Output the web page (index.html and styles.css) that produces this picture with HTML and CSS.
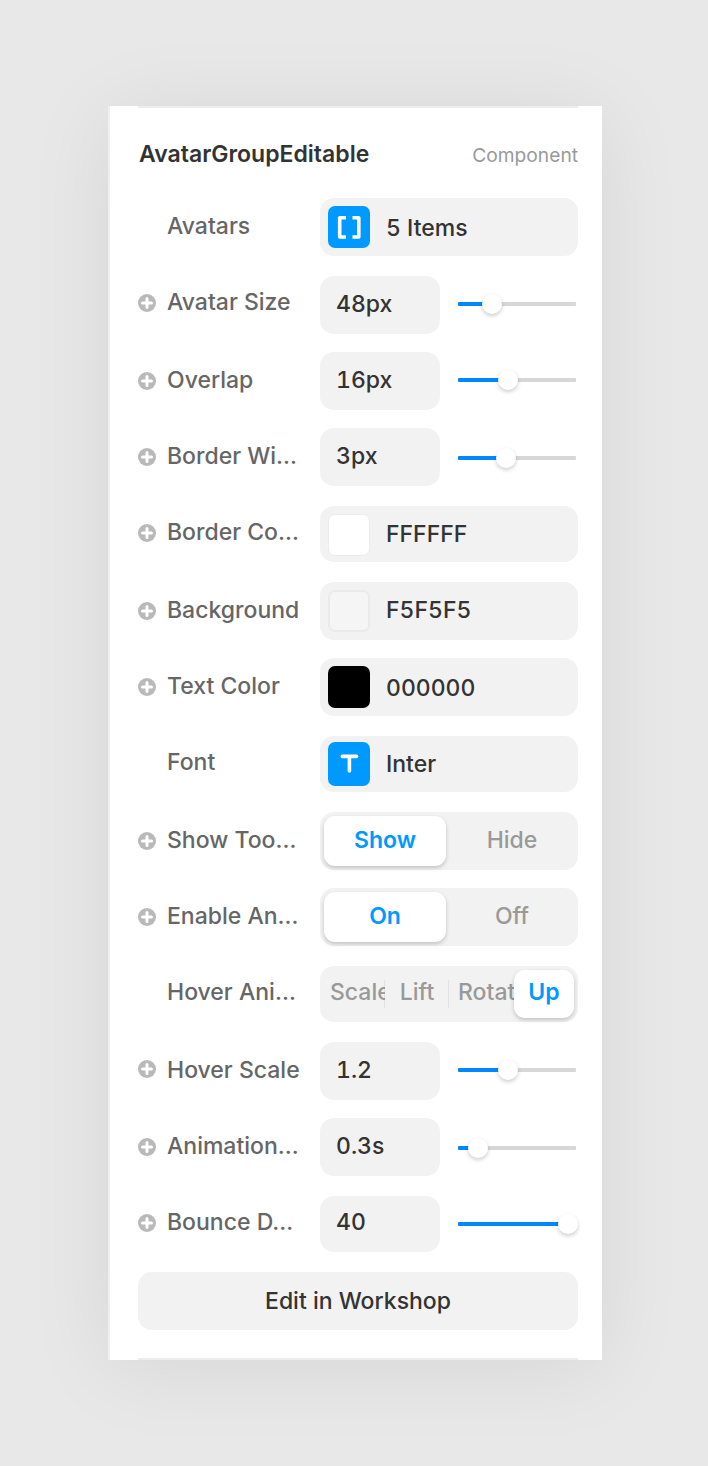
FILE: index.html
```html
<!DOCTYPE html>
<html lang="en">
<head>
<meta charset="utf-8">
<title>AvatarGroupEditable</title>
<link rel="stylesheet" href="styles.css">
</head>
<body>
<svg class="defs" width="0" height="0"><symbol id="plus" viewBox="0 0 18 18"><circle cx="9" cy="9" r="9" fill="#b9b9b9"/><path d="M9 4.500v9M4.500 9h9" stroke="#fff" stroke-width="3" stroke-linecap="round"/></symbol></svg>
<main class="panel">
  <header class="head"><h1 class="title">AvatarGroupEditable</h1><span class="kind">Component</span></header>
  <section class="rows">
    <div class="row tall low"><i></i><span class="label">Avatars</span><div class="field"><span class="chip blue"><svg width="42" height="42" viewBox="0 0 42 42"><path d="M18 11.800h-6.300v19.200h6.300M24.500 11.800h6.300v19.200h-6.300" fill="none" stroke="#fff" stroke-width="3.600" stroke-linejoin="round"/></svg></span><span class="value">5 Items</span></div></div>
    <div class="row high"><svg class="plus"><use href="#plus"/></svg><span class="label">Avatar Size</span><div class="field num"><span class="value">48px</span></div><div class="slider"><b style="width:34px"></b></div></div>
    <div class="row"><svg class="plus"><use href="#plus"/></svg><span class="label">Overlap</span><div class="field num"><span class="value">16px</span></div><div class="slider"><b style="width:50px"></b></div></div>
    <div class="row tall sl-low"><svg class="plus"><use href="#plus"/></svg><span class="label">Border Wi…</span><div class="field num"><span class="value">3px</span></div><div class="slider"><b style="width:48px"></b></div></div>
    <div class="row short"><svg class="plus"><use href="#plus"/></svg><span class="label">Border Co…</span><div class="field"><span class="chip white"></span><span class="value">FFFFFF</span></div></div>
    <div class="row"><svg class="plus"><use href="#plus"/></svg><span class="label">Background</span><div class="field"><span class="chip grey"></span><span class="value">F5F5F5</span></div></div>
    <div class="row tall low"><svg class="plus"><use href="#plus"/></svg><span class="label">Text Color</span><div class="field"><span class="chip black"></span><span class="value">000000</span></div></div>
    <div class="row short"><i></i><span class="label">Font</span><div class="field"><span class="chip blue type"><svg width="42" height="44" viewBox="0 0 42 44"><path d="M14.300 14.400h14.200M21.400 14.400v14.600" fill="none" stroke="#fff" stroke-width="3.600" stroke-linecap="round"/></svg></span><span class="value">Inter</span></div></div>
    <div class="row"><svg class="plus"><use href="#plus"/></svg><span class="label">Show Too…</span><div class="field seg"><span class="opt on">Show</span><span class="opt">Hide</span></div></div>
    <div class="row tall"><svg class="plus"><use href="#plus"/></svg><span class="label">Enable An…</span><div class="field seg"><span class="opt on">On</span><span class="opt">Off</span></div></div>
    <div class="row short"><i></i><span class="label">Hover Ani…</span><div class="field seg four"><span class="opt clip first">Scale</span><span class="opt mid">Lift</span><span class="opt clip third">Rotate</span><span class="opt on">Up</span></div></div>
    <div class="row up"><svg class="plus"><use href="#plus"/></svg><span class="label">Hover Scale</span><div class="field num"><span class="value">1.2</span></div><div class="slider"><b style="width:50px"></b></div></div>
    <div class="row tall sl-low"><svg class="plus"><use href="#plus"/></svg><span class="label">Animation…</span><div class="field num"><span class="value">0.3s</span></div><div class="slider"><b style="width:20px"></b></div></div>
    <div class="row short"><svg class="plus"><use href="#plus"/></svg><span class="label">Bounce D…</span><div class="field num"><span class="value">40</span></div><div class="slider"><b style="width:110px"></b></div></div>
  </section>
  <button class="edit">Edit in Workshop</button>
</main>
</body>
</html>
```
FILE: styles.css
```css
* { box-sizing: border-box; }
body {
  margin: 0;
  min-height: 1466px;
  padding: 106px 106px 106px 108px;
  background: #e8e8e8;
  font: 500 23px/30px Inter, "Liberation Sans", sans-serif;
  font-variant-numeric: tabular-nums;
  color: #333;
}
.defs { position: absolute; }
.panel {
  display: flex;
  flex-direction: column;
  width: 494px;
  height: 1254px;
  padding: 0 24px 0 28px;
  border-left: 2px solid #f0f0f0;
  background: #fff;
  box-shadow: 0 8px 80px rgba(0, 0, 0, .08);
}
.panel::after {
  content: "";
  height: 2px;
  margin-top: auto;
  background: #ededed;
}
.head {
  display: flex;
  justify-content: space-between;
  height: 92px;
  padding: 31px 0 0 1px;
  border-top: 2px solid #ededed;
}
.title { margin: 0; font-size: 23px; font-weight: 600; line-height: 30px; }
.kind { font-size: 19.2px; font-weight: 400; line-height: 33px; color: #999; }
.row {
  display: grid;
  grid-template-columns: 29px 153px 120px 1fr;
  align-items: start;
  height: 76px;
}
.row.tall { height: 78px; }
.label { line-height: 57px; color: #666; white-space: nowrap; }
.high .label, .short .label { line-height: 53px; }
.plus { width: 18px; height: 18px; margin-top: 20px; }
.high .plus, .short .plus, .up .plus { margin-top: 18px; }
.field {
  grid-column: 3 / 5;
  display: flex;
  height: 58px;
  padding: 0 8px;
  border-radius: 14px;
  background: #f2f2f2;
}
.short .field { height: 56px; }
.num { grid-column: 3; padding: 0 16px; }
.value { line-height: 57px; }
.low .value { line-height: 61px; }
.short .num .value { line-height: 53px; }
.chip { width: 42px; height: 42px; margin: 8px 16px 0 0; border-radius: 7px; }
.chip svg { display: block; }
.blue { background: #09f; }
.type { height: 44px; margin-top: 6px; }
.white { background: #fff; border: 1px solid #ebebeb; }
.grey { background: #f5f5f5; border: 2px solid #eaeaea; }
.black { background: #000; }
.slider {
  height: 4px;
  width: 118px;
  margin: 26px 0 0 18px;
  border-radius: 1px;
  background: #d7d7d7;
}
.sl-low .slider, .short .slider { margin-top: 28px; }
.short .slider { margin-top: 26px; }
.slider b {
  display: flex;
  justify-content: flex-end;
  align-items: center;
  height: 4px;
  border-radius: 1px;
  background: #0087ff;
}
.slider b::after {
  content: "";
  flex: none;
  width: 20px;
  height: 20px;
  margin-right: -10px;
  border-radius: 50%;
  background: #fff;
  box-shadow: 0 2px 4px rgba(0, 0, 0, .2);
}
.seg { display: grid; grid-template-columns: 122px 1fr; padding: 4px 0 4px 4px; }
.opt { line-height: 49px; text-align: center; color: #999; }
.opt.on {
  height: 50px;
  border-radius: 11px;
  background: #fff;
  color: #09f;
  font-weight: 600;
  box-shadow: 0 2px 4px rgba(0, 0, 0, .2);
}
.four { grid-template-columns: 61px 64px 65px 60px; }
.four .opt { height: 48px; line-height: 45px; }
.four .clip { overflow: hidden; text-align: left; padding-left: 6px; }
.four .third { padding-left: 9px; }
.first, .mid {
  background: linear-gradient(#e2e2e2, #e2e2e2) 100% 10px / 1px 28px no-repeat;
}
.edit {
  width: 440px;
  height: 58px;
  padding: 0;
  border: 0;
  border-radius: 14px;
  background: #f2f2f2;
  color: #333;
  font: inherit;
}
```
